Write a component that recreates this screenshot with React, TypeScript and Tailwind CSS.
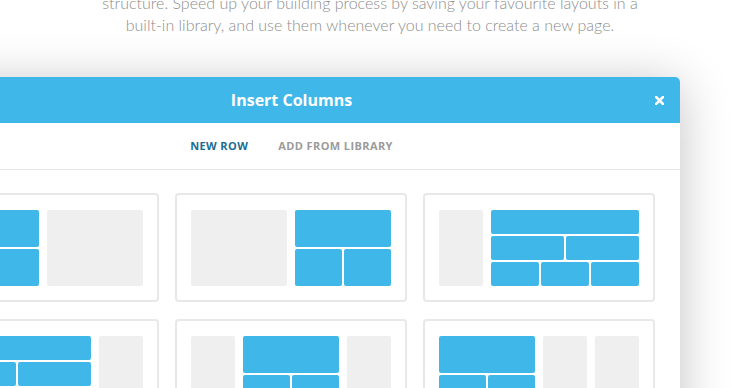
const blue = 'bg-[#3fb8e9] rounded-[2px]';
const gray = 'bg-[#efefef] rounded-[2px]';

const Half = () => (
  <div className="flex w-[96px] flex-col gap-[2px]">
    <div className={`flex-1 ${blue}`} />
    <div className="flex flex-1 gap-[2px]">
      <div className={`flex-1 ${blue}`} />
      <div className={`flex-1 ${blue}`} />
    </div>
  </div>
);

const Stack = () => (
  <div className="flex w-[148px] flex-col gap-[2px]">
    <div className={`flex-1 ${blue}`} />
    <div className="flex flex-1 gap-[2px]">
      <div className={`flex-1 ${blue}`} />
      <div className={`flex-1 ${blue}`} />
    </div>
    <div className="flex flex-1 gap-[2px]">
      <div className={`flex-1 ${blue}`} />
      <div className={`flex-1 ${blue}`} />
      <div className={`flex-1 ${blue}`} />
    </div>
  </div>
);

const Wide = () => <div className={`w-[96px] ${gray}`} />;
const Narrow = () => <div className={`w-[44px] ${gray}`} />;

const Card = ({ children }: { children: React.ReactNode }) => (
  <div className="w-[232px] rounded-[4px] border-2 border-[#e8e8e8] bg-white px-[14px] pt-[15px] pb-[14px]">
    <div className="flex h-[76px] w-[200px] gap-2">{children}</div>
  </div>
);

export default function App() {
  return (
    <div className="relative h-[388px] w-[748px] overflow-hidden bg-white">
      <div className="flex justify-center pr-2">
        <p className="mt-[-8px] text-center text-[16px] leading-[22px] font-light text-[#8d8d8d] [font-family:Lato,'Open_Sans',sans-serif]">
          structure. Speed up your building process by saving your favourite layouts in a
          <br />
          built-in library, and use them whenever you need to create a new page.
        </p>
      </div>

      <div className="mt-[41px] ml-[-97px] w-[777px] rounded-t-[5px] bg-white shadow-[0_6px_50px_rgba(0,0,0,0.24)] [font-family:'Open_Sans',sans-serif]">
        <div className="grid h-[46px] grid-cols-[1fr_auto_1fr] items-center rounded-t-[5px] bg-[#3fb8e9] px-4">
          <div />
          <h2 className="text-[16px] font-bold text-white">Insert Columns</h2>
          <div className="flex justify-end">
            <svg width="9" height="9" viewBox="0 0 9 9" className="text-white">
              <path d="M1 1 L8 8 M8 1 L1 8" stroke="currentColor" strokeWidth="2.6" strokeLinecap="square" />
            </svg>
          </div>
        </div>

        <div className="flex h-[47px] items-center justify-center gap-[30px] border-b border-[#e6e6e6] text-[11px] font-bold tracking-[0.4px] uppercase">
          <span className="text-[#1b6d93]">New Row</span>
          <span className="text-[#9b9b9b]">Add From Library</span>
        </div>

        <div className="grid grid-cols-[232px_232px_232px] gap-x-4 gap-y-[17px] px-6 pt-[23px] pb-6">
          <Card>
            <Half />
            <Wide />
          </Card>
          <Card>
            <Wide />
            <Half />
          </Card>
          <Card>
            <Narrow />
            <Stack />
          </Card>
          <Card>
            <Stack />
            <Narrow />
          </Card>
          <Card>
            <Narrow />
            <Half />
            <Narrow />
          </Card>
          <Card>
            <Half />
            <Narrow />
            <Narrow />
          </Card>
        </div>
      </div>
    </div>
  );
}
